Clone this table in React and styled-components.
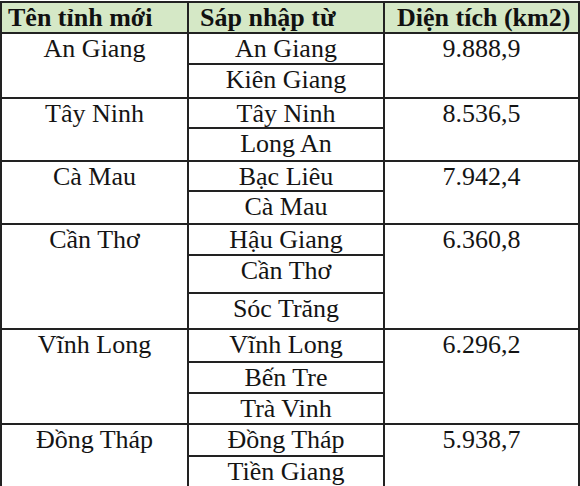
import React from "react";
import styled, { createGlobalStyle } from "styled-components";

const GlobalStyle = createGlobalStyle`
    html, body {
        margin: 0;
        padding: 0;
        background: #ffffff;
    }
    body {
        font-family: "Liberation Serif", "Times New Roman", serif;
        color: #141414;
    }
`;

const groups = [
    { name: "An Giang", merged: ["An Giang", "Kiên Giang"], area: "9.888,9", heights: [31, 34] },
    { name: "Tây Ninh", merged: ["Tây Ninh", "Long An"], area: "8.536,5", heights: [30, 33] },
    { name: "Cà Mau", merged: ["Bạc Liêu", "Cà Mau"], area: "7.942,4", heights: [30, 33] },
    { name: "Cần Thơ", merged: ["Hậu Giang", "Cần Thơ", "Sóc Trăng"], area: "6.360,8", heights: [31, 38, 36] },
    { name: "Vĩnh Long", merged: ["Vĩnh Long", "Bến Tre", "Trà Vinh"], area: "6.296,2", heights: [33, 31, 31] },
    { name: "Đồng Tháp", merged: ["Đồng Tháp", "Tiền Giang"], area: "5.938,7", heights: [32, 32] },
];

export default function App() {
    return (
        <>
            <GlobalStyle />
            <Page>
                <Table>
                    <colgroup>
                        <col style={{ width: 187 }} />
                        <col style={{ width: 196 }} />
                        <col style={{ width: 195 }} />
                    </colgroup>
                    <thead>
                        <Row $h={31}>
                            <HeadCell $pad={6}>Tên tỉnh mới</HeadCell>
                            <HeadCell $pad={11}>Sáp nhập từ</HeadCell>
                            <HeadCell $pad={12}>Diện tích (km2)</HeadCell>
                        </Row>
                    </thead>
                    <tbody>
                        {groups.map((group) =>
                            group.merged.map((old, i) => (
                                <Row key={group.name + old} $h={group.heights[i]}>
                                    {i === 0 && (
                                        <Cell rowSpan={group.merged.length}>{group.name}</Cell>
                                    )}
                                    <Cell>{old}</Cell>
                                    {i === 0 && (
                                        <Cell rowSpan={group.merged.length}>{group.area}</Cell>
                                    )}
                                </Row>
                            ))
                        )}
                    </tbody>
                </Table>
            </Page>
        </>
    );
}

const Page = styled.div`
    width: 580px;
    height: 486px;
    overflow: hidden;
    padding-top: 1px;
    box-sizing: border-box;
`;

const Table = styled.table`
    width: 578px;
    table-layout: fixed;
    border-collapse: collapse;
    border: 2px solid #222;
    font-family: "Liberation Serif", "Times New Roman", serif;
    font-size: 26px;
    line-height: 26px;
    color: #141414;
`;

const Row = styled.tr`
    height: ${(p) => p.$h}px;
`;

const HeadCell = styled.th`
    background: #d5e8c6;
    border: 2px solid #222;
    padding: 2px 0 0 ${(p) => p.$pad}px;
    text-align: left;
    font-weight: bold;
    vertical-align: top;
    white-space: nowrap;
    color: #111;
`;

const Cell = styled.td`
    border: 2px solid #222;
    padding: 2px 0 0;
    text-align: center;
    vertical-align: top;
    white-space: nowrap;
`;
